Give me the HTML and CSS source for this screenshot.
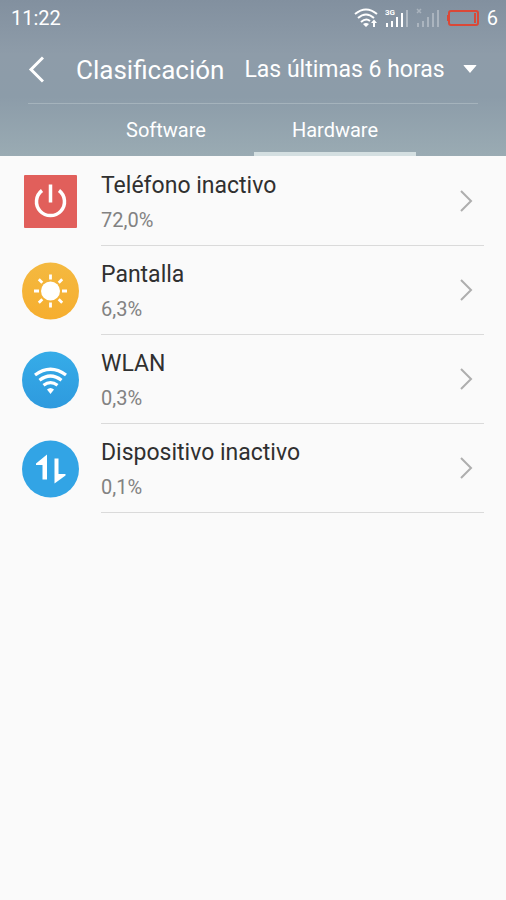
FILE: index.html
```html
<!DOCTYPE html>
<html lang="es">
<head>
<meta charset="utf-8">
<meta name="viewport" content="width=device-width, initial-scale=1">
<title>Clasificación</title>
<link rel="stylesheet" href="styles.css">
</head>
<body>
<header class="header">
  <div class="status">
    <span class="time">11:22</span>
    <div class="indicators">
      <svg class="wifi-status" width="24" height="20" viewBox="0 0 24 20" fill="none" stroke="#fff" stroke-width="2" aria-hidden="true">
        <path d="M1 6Q12-3 23 6M4 10Q12 3 20 10M7 14Q12 9.500 16 13"/>
        <path d="M9 16Q12 14 15 16L12 19ZM17 15L20 11.500L23 15H21V19H19V15Z" fill="#fff" stroke="none"/>
      </svg>
      <svg class="signal" width="24" height="20" viewBox="0 0 24 20" aria-hidden="true">
        <path d="M1 15H3V19H1ZM6 13H8V19H6ZM11 9H13V19H11ZM16 5H18V19H16Z" fill="#fff"/>
        <path d="M21 2H23V19H21Z" fill="#fff" opacity=".35"/>
        <text class="network" x="0" y="7">3G</text>
      </svg>
      <svg class="signal-off" width="24" height="20" viewBox="0 0 24 20" aria-hidden="true">
        <path d="M1 15H3V19H1ZM6 13H8V19H6ZM11 9H13V19H11ZM16 5H18V19H16ZM21 2H23V19H21Z" fill="#fff"/>
        <path d="M1 1L5 5M5 1L1 5" stroke="#fff" stroke-width="1.500"/>
      </svg>
      <svg class="battery" width="33" height="18" viewBox="0 0 33 18" aria-hidden="true">
        <rect x="2" y="2" width="29" height="14" rx="2" fill="none" stroke="#db4837" stroke-width="2"/>
        <path d="M0 6H2V12H0ZM27 4H29V14H27Z" fill="#db4837"/>
      </svg>
      <span class="level">6</span>
    </div>
  </div>
  <div class="toolbar">
    <button class="back" type="button" aria-label="Atrás">
      <svg width="16" height="28" viewBox="0 0 16 28" fill="none" stroke="#fff" stroke-width="3" aria-hidden="true"><path d="M15 1.500L3 13.500L15 25.500"/></svg>
    </button>
    <h1 class="title">Clasificación</h1>
    <div class="period">
      <select class="period-select" aria-label="Periodo">
        <option>Las últimas 6 horas</option>
      </select>
      <svg class="caret" width="14" height="8" viewBox="0 0 14 8" aria-hidden="true"><path d="M1 0H13Q14 0 13 1L7 8L1 1Q0 0 1 0Z" fill="#fff"/></svg>
    </div>
  </div>
  <div class="tabs" role="tablist">
    <button class="tab" type="button" role="tab" aria-selected="false">Software</button>
    <button class="tab tab-active" type="button" role="tab" aria-selected="true">Hardware</button>
  </div>
</header>
<main>
  <ul class="list">
    <li><a class="row" href="#telefono">
      <svg class="icon" width="58" height="58" viewBox="0 0 58 58" aria-hidden="true">
        <rect x="2" y="2" width="53" height="53" rx="1" fill="#e15f5b"/>
        <path d="M20 17.500A14 14 0 1 0 37 17.500M28.500 11.500V29.500" fill="none" stroke="#fff" stroke-width="3.500"/>
      </svg>
      <div class="body">
        <div class="text"><span class="name">Teléfono inactivo</span><span class="value">72,0%</span></div>
        <svg class="chevron" width="14" height="24" viewBox="0 0 14 24" aria-hidden="true"><path d="M1 2L11 12L1 22"/></svg>
      </div>
    </a></li>
    <li><a class="row" href="#pantalla">
      <svg class="icon" width="58" height="58" viewBox="0 0 58 58" aria-hidden="true">
        <defs><linearGradient id="amber" x2="0" y2="1"><stop stop-color="#f4b940"/><stop offset="1" stop-color="#f6ae2f"/></linearGradient></defs>
        <circle cx="28.500" cy="29" r="28.500" fill="url(#amber)"/>
        <circle cx="28.500" cy="29" r="9.500" fill="#fff"/>
        <path d="M28.500 12.500V17.500M28.500 40.500V45.500M12 29H17M40 29H45M16.800 17.300L20.300 20.800M36.700 37.200L40.200 40.700M40.200 17.300L36.700 20.800M20.300 37.200L16.800 40.700" stroke="#fff" stroke-width="2.800"/>
      </svg>
      <div class="body">
        <div class="text"><span class="name">Pantalla</span><span class="value">6,3%</span></div>
        <svg class="chevron" width="14" height="24" viewBox="0 0 14 24" aria-hidden="true"><path d="M1 2L11 12L1 22"/></svg>
      </div>
    </a></li>
    <li><a class="row" href="#wlan">
      <svg class="icon" width="58" height="58" viewBox="0 0 58 58" aria-hidden="true">
        <defs><linearGradient id="blue" x2="0" y2="1"><stop stop-color="#36ace8"/><stop offset="1" stop-color="#2e9ade"/></linearGradient></defs>
        <circle cx="28.500" cy="29" r="28.500" fill="url(#blue)"/>
        <path d="M13 24Q28.500 12.500 44 24M17.500 29.200Q28.500 20.800 39.500 29.200M21.500 34.300Q28.500 29 35.500 34.300" fill="none" stroke="#fff" stroke-width="3.300"/>
        <path d="M25 38.500Q28.500 35.500 32 38.500L28.500 43Z" fill="#fff"/>
      </svg>
      <div class="body">
        <div class="text"><span class="name">WLAN</span><span class="value">0,3%</span></div>
        <svg class="chevron" width="14" height="24" viewBox="0 0 14 24" aria-hidden="true"><path d="M1 2L11 12L1 22"/></svg>
      </div>
    </a></li>
    <li><a class="row" href="#dispositivo">
      <svg class="icon" width="58" height="58" viewBox="0 0 58 58" aria-hidden="true">
        <circle cx="28.500" cy="29" r="28.500" fill="#32a4e5"/>
        <path d="M25 14.500V39.500H20.500V25H14V23.500ZM32.500 18.500H36.500V34H43.500V35.500L32.500 43.500Z" fill="#fff"/>
      </svg>
      <div class="body">
        <div class="text"><span class="name">Dispositivo inactivo</span><span class="value">0,1%</span></div>
        <svg class="chevron" width="14" height="24" viewBox="0 0 14 24" aria-hidden="true"><path d="M1 2L11 12L1 22"/></svg>
      </div>
    </a></li>
  </ul>
</main>
</body>
</html>
```
FILE: styles.css
```css
* { box-sizing: border-box; }
body {
  margin: 0;
  min-height: 100vh;
  background: #fafafa;
  color: #303030;
  font-family: Roboto, "Liberation Sans", sans-serif;
}
button, select {
  margin: 0;
  padding: 0;
  border: 0;
  background: none;
  color: inherit;
  font: inherit;
}
svg { display: block; flex: none; }

.header {
  color: #fff;
  background: linear-gradient(#82909f, #8e9ca9 35%, #8c9ca9 62%, #9aabb3);
}
.status {
  display: flex;
  align-items: center;
  justify-content: space-between;
  height: 36px;
  padding: 0 8px 0 11px;
  font-size: 20px;
}
.indicators { display: flex; align-items: center; gap: 7px; }
.network { font-size: 8px; font-weight: 700; fill: #fff; }
.signal-off { opacity: .3; }

.toolbar {
  display: flex;
  align-items: center;
  height: 68px;
  margin: 0 28px;
  border-bottom: 1px solid #a5b3bc;
}
.back { width: 48px; height: 48px; }
.title {
  flex: none;
  margin: 0;
  font-size: 26px;
  font-weight: 400;
}
.period {
  position: relative;
  flex: 1;
  margin-left: 20px;
}
.period-select {
  display: block;
  appearance: none;
  width: 100%;
  font-size: 23px;
}
.period-select option { color: #303030; }
.caret {
  position: absolute;
  right: 1px;
  top: 9px;
  pointer-events: none;
}

.tabs {
  display: grid;
  grid-template-columns: 1fr 1fr;
  gap: 7px;
  height: 52px;
  padding: 0 90px 0 85px;
}
.tab {
  border-top: 4px solid transparent;
  border-bottom: 4px solid transparent;
  font-size: 20px;
}
.tab-active { border-bottom-color: #d4dfe1; }

.list { margin: 0; padding: 1px 0 0; list-style: none; }
.row {
  display: flex;
  align-items: center;
  gap: 21px;
  height: 89px;
  padding: 0 22px;
  color: inherit;
  text-decoration: none;
}
.body {
  display: flex;
  flex: 1;
  align-items: center;
  justify-content: space-between;
  height: 100%;
  padding-right: 10px;
  border-bottom: 1px solid #dadada;
}
.text { display: flex; flex-direction: column; gap: 6px; padding-top: 3px; }
.name { font-size: 23px; line-height: 28px; }
.value { font-size: 20px; line-height: 28px; color: #828282; }
.chevron path { fill: none; stroke: #aeaeae; stroke-width: 2; }
```
